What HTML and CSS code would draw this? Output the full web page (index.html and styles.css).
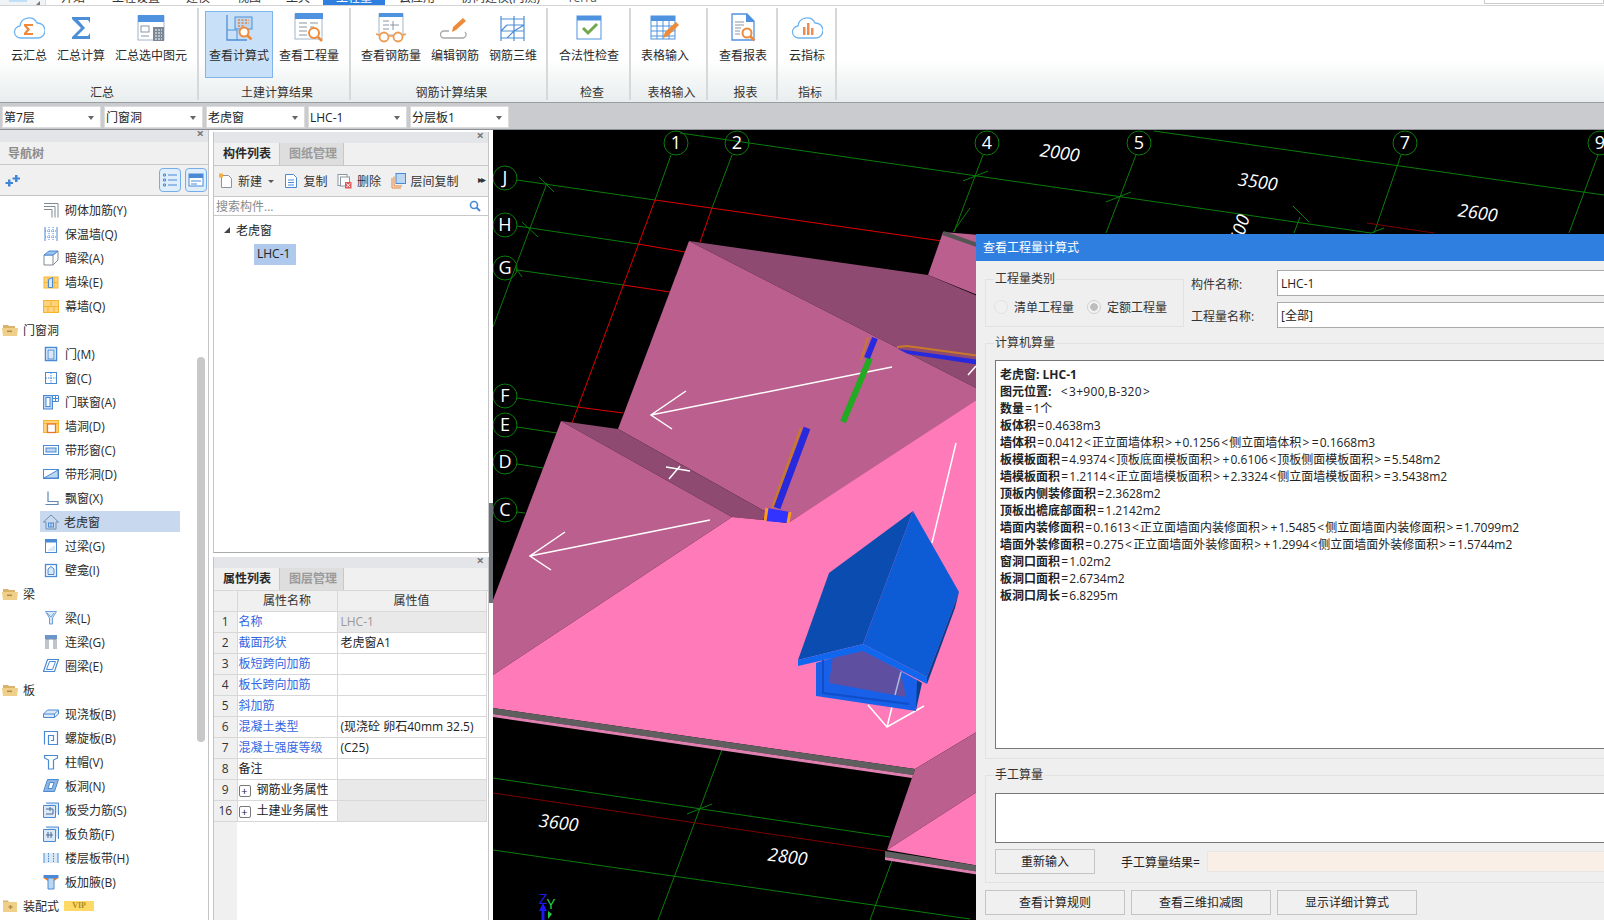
FILE: index.html
```html
<!DOCTYPE html>
<html lang="zh-CN">
<head>
<meta charset="utf-8">
<title>查看工程量计算式</title>
<link rel="stylesheet" href="styles.css">
</head>
<body>
<svg class="defs" width="0" height="0">
  <symbol id="folder" viewBox="0 0 16 12"><path d="M1 3V1h5l1 1h6v2H1z" fill="#d9b26c"/><path d="M0 4h16l-1 8H1z" fill="#f0cf88"/><rect x="5" y="6.5" width="5" height="1.6" fill="#b48c50"/></symbol>
</svg>
<div class="app">
  <div class="tabs">
    <div class="logo"><span class="logo-mark"></span><span class="logo-tri"></span></div>
    <span class="tab t1">开始</span><span class="tab t2">工程设置</span><span class="tab t3">建模</span><span class="tab t4">视图</span><span class="tab t5">工具</span><span class="tab active">工程量</span><span class="tab t7">云应用</span><span class="tab t8">协同建模(内测)</span><span class="tab t9">Terra</span>
    <div class="finder"></div>
  </div>

  <div class="ribbon">
    <div class="group g1">
      <div class="btns">
        <div class="rb w44"><svg width="32" height="30" viewBox="0 0 32 30"><path d="M8 25a6 6 0 0 1-1-12 9 9 0 0 1 17-3 7.500 7.500 0 0 1 1 15z" fill="#fff" stroke="#6fb4f0" stroke-width="1.300"/><path d="M11 11h9v2h-6l3 3.500-3 3.500h6v2h-9v-2l3-3.500-3-3.500z" fill="#f0883a"/></svg><span>云汇总</span></div>
        <div class="rb w56"><svg width="32" height="30" viewBox="0 0 32 30"><path d="M7 4h18v6l-2-3H13l7 8-8 8h11l2-3v6H7v-2l9-9-9-9z" fill="#4d8fd6"/></svg><span>汇总计算</span></div>
        <div class="rb w80"><svg width="32" height="30" viewBox="0 0 32 30"><rect x="3" y="3" width="26" height="24" fill="#fff" stroke="#9fb6cc"/><rect x="3" y="2" width="26" height="7" fill="#4f93e0"/><rect x="6" y="13" width="8" height="6" fill="none" stroke="#8a96a2"/><path d="M6 23h8" stroke="#8a96a2"/><rect x="18" y="14" width="11" height="14" fill="#7b8794"/><path d="M20 17h7M20 20h7M20 23h7M20 26h7" stroke="#fff" stroke-dasharray="2 1"/></svg><span>汇总选中图元</span></div>
      </div>
      <div class="gt">汇总</div>
    </div>
    <div class="group g2">
      <div class="btns">
        <div class="rb w68 on"><svg width="32" height="30" viewBox="0 0 32 30"><path d="M4 2v25h20" fill="none" stroke="#4d8fd6" stroke-width="1.300"/><path d="M4 17h10v10" fill="none" stroke="#4d8fd6"/><rect x="12" y="4" width="17" height="12" fill="#bcd7f2" stroke="#4d8fd6"/><path d="M15 7h11M15 10h11M15 13h6" stroke="#e8813a" stroke-width="1.500" stroke-dasharray="2 1.500"/><circle cx="21" cy="19" r="4.500" fill="#fff" stroke="#ee8b3a" stroke-width="2"/><path d="M24.500 22.500l4 4" stroke="#ee8b3a" stroke-width="2.500"/></svg><span>查看计算式</span></div>
        <div class="rb w68"><svg width="32" height="30" viewBox="0 0 32 30"><rect x="2" y="1" width="27" height="25" fill="#fff" stroke="#9fb6cc"/><rect x="2" y="0" width="28" height="6" fill="#4f93e0"/><path d="M6 10h8M17 10h8M6 14h8M17 14h4M6 18h8M6 22h8" stroke="#8a96a2"/><circle cx="21" cy="20" r="5" fill="#fff" stroke="#ee8b3a" stroke-width="2"/><path d="M25 24l4 4" stroke="#ee8b3a" stroke-width="2.500"/></svg><span>查看工程量</span></div>
      </div>
      <div class="gt">土建计算结果</div>
    </div>
    <div class="group g3">
      <div class="btns">
        <div class="rb w68"><svg width="32" height="30" viewBox="0 0 32 30"><rect x="4" y="1" width="24" height="21" fill="#fff" stroke="#9fb6cc"/><rect x="4" y="0" width="24" height="4" fill="#4f93e0"/><path d="M8 8h6M8 12h6M8 16h6M18 8v9M15 12h9" stroke="#8a96a2"/><circle cx="9" cy="24" r="4.500" fill="#fff" stroke="#ee9a50" stroke-width="1.800"/><circle cx="23" cy="24" r="4.500" fill="#fff" stroke="#ee9a50" stroke-width="1.800"/><path d="M13 23h6M1 21l3 1M31 21l-3 1" stroke="#ee9a50" stroke-width="1.500"/></svg><span>查看钢筋量</span></div>
        <div class="rb w56"><svg width="32" height="30" viewBox="0 0 32 30"><path d="M10 18H5a3.500 3.500 0 0 0 0 7h19a3.500 3.500 0 0 0 2-6" fill="none" stroke="#a8a8a8" stroke-width="1.300"/><path d="M13 19l1-5L24 5l3 3-10 9z" fill="#ee8b3a"/></svg><span>编辑钢筋</span></div>
        <div class="rb w56"><svg width="32" height="30" viewBox="0 0 32 30"><path d="M4 3v25M27 3v25M17 3v25M4 6h23M10 12h17M4 18h23M4 25h23M4 18l6-6M17 18l-7 7M27 12l-10 6" fill="none" stroke="#4d8fd6" stroke-width="1.200"/></svg><span>钢筋三维</span></div>
      </div>
      <div class="gt">钢筋计算结果</div>
    </div>
    <div class="group g4">
      <div class="btns">
        <div class="rb w68"><svg width="32" height="30" viewBox="0 0 32 30"><rect x="4" y="3" width="24" height="23" fill="#fff" stroke="#4f93e0"/><rect x="4" y="3" width="24" height="4.500" fill="#4f93e0"/><path d="M10 15l5 5 9-9" fill="none" stroke="#72a84c" stroke-width="3"/></svg><span>合法性检查</span></div>
      </div>
      <div class="gt">检查</div>
    </div>
    <div class="group g5">
      <div class="btns">
        <div class="rb w56"><svg width="32" height="30" viewBox="0 0 32 30"><rect x="2" y="3" width="24" height="23" fill="#fff" stroke="#4f93e0"/><rect x="2" y="3" width="24" height="5" fill="#4f93e0"/><path d="M2 13h24M2 18h24M2 23h24M8 8v18M14 8v18M20 8v18" stroke="#4f93e0"/><path d="M14 25l2-6L27 9l3 3-11 11z" fill="#ee8b3a"/></svg><span>表格输入</span></div>
      </div>
      <div class="gt">表格输入</div>
    </div>
    <div class="group g6">
      <div class="btns">
        <div class="rb w56"><svg width="32" height="30" viewBox="0 0 32 30"><path d="M5 1h15l7 7v19H5z" fill="#fff" stroke="#4f93e0" stroke-width="1.300"/><path d="M19 1h1l7 7v1h-8z" fill="#4f93e0"/><path d="M8 9h9M8 12h9M8 15h6M8 18h5M8 21h5" stroke="#8a96a2"/><circle cx="20" cy="20" r="4.500" fill="#fff" stroke="#ee8b3a" stroke-width="2"/><path d="M23.500 23.500l4 4" stroke="#ee8b3a" stroke-width="2.500"/></svg><span>查看报表</span></div>
      </div>
      <div class="gt">报表</div>
    </div>
    <div class="group g7">
      <div class="btns">
        <div class="rb w44"><svg width="32" height="30" viewBox="0 0 32 30"><path d="M8 25a6 6 0 0 1-1-12 9 9 0 0 1 17-3 7.500 7.500 0 0 1 1 15z" fill="#fff" stroke="#6fb4f0" stroke-width="1.300"/><path d="M12 14h2.500v8H12zM16 10h2.500v12H16zM20 15h2.500v7H20z" fill="#ee8b50"/></svg><span>云指标</span></div>
      </div>
      <div class="gt">指标</div>
    </div>
  </div>

  <div class="selectors">
    <div class="sel">第7层<i></i></div>
    <div class="sel">门窗洞<i></i></div>
    <div class="sel">老虎窗<i></i></div>
    <div class="sel">LHC-1<i></i></div>
    <div class="sel">分层板1<i></i></div>
  </div>

  <div class="main">
    <aside class="nav">
      <div class="strip"><span class="x">×</span></div>
      <div class="nav-title">导航树</div>
      <div class="nav-tools">
        <svg width="16" height="14" viewBox="0 0 16 14"><path d="M3 6.500h2.500V9H8v2H5.500v2.500H3V11H0.500V9H3zM10 2h2.500v2.500H15v2h-2.500V9H10V6.500H7.500v-2H10z" fill="#3f86d8"/></svg>
        <div class="tb-btn tb-first"><svg width="16" height="16" viewBox="0 0 16 16"><path d="M6 3h9M6 8h9M6 13h9" stroke="#4a8ad4"/><path d="M1.500 2h2v2h-2zM1.500 7h2v2h-2zM1.500 12h2v2h-2z" fill="none" stroke="#4a8ad4"/></svg></div>
        <div class="tb-btn"><svg width="16" height="16" viewBox="0 0 16 16"><rect x="1" y="2" width="14" height="12" fill="#fff" stroke="#4a8ad4"/><rect x="1" y="2" width="14" height="4" fill="#4a8ad4"/><path d="M3 9h10M3 12h6" stroke="#4a8ad4"/></svg></div>
      </div>
      <div class="tree">
        <div class="t"><svg width="16" height="16" viewBox="0 0 16 16"><path d="M1 1.500h14v14M1 4.500h11v11M1 7.500h8v8" fill="none" stroke="#7f8a96"/></svg>砌体加筋(Y)</div>
        <div class="t"><svg width="16" height="16" viewBox="0 0 16 16"><path d="M2 1v14M14 1v14" stroke="#4a8ad4"/><path d="M6 1v14M10 1v14M2 5h12M2 11h12" stroke="#4a8ad4" stroke-dasharray="1 1"/></svg>保温墙(Q)</div>
        <div class="t"><svg width="16" height="16" viewBox="0 0 16 16"><path d="M1 5h9v10H1zM10 5l5-4v9l-5 5" fill="#fff" stroke="#7f8a96"/><path d="M1 5l5-4h9l-5 4z" fill="#9cc3ee" stroke="#4a8ad4"/></svg>暗梁(A)</div>
        <div class="t"><svg width="16" height="16" viewBox="0 0 16 16"><rect x="1" y="3" width="14" height="11" fill="#ffd27f" stroke="#f5b52e"/><path d="M1 8.500h14M5 3v11M11 3v11" stroke="#f5b52e"/><path d="M5.500 5.500l4-2v10h-4z" fill="#dbe8f6" stroke="#4a8ad4"/></svg>墙垛(E)</div>
        <div class="t"><svg width="16" height="16" viewBox="0 0 16 16"><rect x="0.500" y="2.500" width="15" height="12" fill="#ffd27f" stroke="#f5b52e"/><path d="M0.500 8.500h15M8 2.500v6M5 8.500v6M11 8.500v6" stroke="#f5b52e"/></svg>幕墙(Q)</div>
        <div class="t grp"><svg width="16" height="12"><use href="#folder"/></svg>门窗洞</div>
        <div class="t"><svg width="16" height="16" viewBox="0 0 16 16"><rect x="2.500" y="1.500" width="11" height="13" fill="#fff" stroke="#4a8ad4" stroke-width="1.500"/><rect x="5" y="4" width="6" height="9" fill="#dbe8f6" stroke="#4a8ad4"/></svg>门(M)</div>
        <div class="t"><svg width="16" height="16" viewBox="0 0 16 16"><rect x="2.500" y="2.500" width="11" height="11" fill="#fff" stroke="#4a8ad4"/><path d="M8 2.500v11M2.500 8h11" stroke="#4a8ad4" stroke-dasharray="1.500 1"/></svg>窗(C)</div>
        <div class="t"><svg width="16" height="16" viewBox="0 0 16 16"><rect x="0.500" y="1.500" width="9" height="13.500" fill="#bcd7f2" stroke="#4a8ad4"/><rect x="3" y="3.500" width="4" height="9" fill="#fff" stroke="#4a8ad4"/><path d="M9.500 1.500h6v6h-6M12.500 1.500v6M9.500 4.500h6" fill="none" stroke="#4a8ad4"/></svg>门联窗(A)</div>
        <div class="t"><svg width="16" height="16" viewBox="0 0 16 16"><rect x="0.500" y="2.500" width="15" height="12" fill="#ffd27f" stroke="#f5b52e"/><path d="M0.500 5.500h15" stroke="#f5b52e"/><rect x="4.500" y="6" width="8" height="8.500" fill="#fff" stroke="#e8772e" stroke-width="1.300"/></svg>墙洞(D)</div>
        <div class="t"><svg width="16" height="16" viewBox="0 0 16 16"><rect x="0.500" y="3.500" width="15" height="9" fill="#fff" stroke="#4a8ad4"/><rect x="3" y="6" width="10" height="4" fill="#bcd7f2" stroke="#4a8ad4"/></svg>带形窗(C)</div>
        <div class="t"><svg width="16" height="16" viewBox="0 0 16 16"><rect x="0.500" y="3.500" width="15" height="9" fill="#fff" stroke="#4a8ad4"/><path d="M1 12l14-8v8z" fill="#bcd7f2" stroke="#4a8ad4"/></svg>带形洞(D)</div>
        <div class="t"><svg width="16" height="16" viewBox="0 0 16 16"><path d="M5 1.500v10h10v3H2.500" fill="none" stroke="#5f87b4" stroke-width="1.200"/></svg>飘窗(X)</div>
        <div class="t sel"><svg width="16" height="16" viewBox="0 0 16 16"><path d="M8 1L0.500 8h2.500v7h10V8h2.500z" fill="none" stroke="#6f8eaf"/><rect x="5.500" y="9" width="5" height="4" fill="none" stroke="#4a8ad4"/><path d="M8 9v4" stroke="#4a8ad4"/></svg>老虎窗</div>
        <div class="t"><svg width="16" height="16" viewBox="0 0 16 16"><rect x="2.500" y="1.500" width="11" height="13" fill="#fff" stroke="#4a8ad4"/><rect x="2.500" y="1.500" width="11" height="3" fill="#4a8ad4"/><path d="M5 12l5-4h2v5H5z" fill="#dbe8f6"/></svg>过梁(G)</div>
        <div class="t"><svg width="16" height="16" viewBox="0 0 16 16"><rect x="2.500" y="2.500" width="11" height="12" fill="#fff" stroke="#4a8ad4" stroke-width="1.300"/><path d="M5 12.500V7l3-2.500L11 7v5.500z" fill="#dbe8f6" stroke="#4a8ad4"/></svg>壁龛(I)</div>
        <div class="t grp"><svg width="16" height="12"><use href="#folder"/></svg>梁</div>
        <div class="t"><svg width="16" height="16" viewBox="0 0 16 16"><path d="M2.500 1.500h11L9.500 8v6h-3V8z" fill="#dbe8f6" stroke="#6ca0da"/><path d="M4 3l4 4 3-4" fill="none" stroke="#6ca0da"/></svg>梁(L)</div>
        <div class="t"><svg width="16" height="16" viewBox="0 0 16 16"><path d="M3 15V5h10v10M5 15V5M11 15V5" fill="none" stroke="#7f8a96"/><rect x="2" y="1" width="12" height="4" fill="#6a96cc"/></svg>连梁(G)</div>
        <div class="t"><svg width="16" height="16" viewBox="0 0 16 16"><path d="M4.500 1.500h11l-4 12H0.500z" fill="#fff" stroke="#4a8ad4" stroke-width="1.200"/><path d="M6.500 3.500h6l-3 8h-6z" fill="#fff" stroke="#4a8ad4"/></svg>圈梁(E)</div>
        <div class="t grp"><svg width="16" height="12"><use href="#folder"/></svg>板</div>
        <div class="t"><svg width="16" height="16" viewBox="0 0 16 16"><path d="M0.500 8l4-4h11l-4 4zM0.500 8v3.500h11V8M11.500 11.500l4-3.500V4" fill="#dbe8f6" stroke="#4a8ad4"/></svg>现浇板(B)</div>
        <div class="t"><svg width="16" height="16" viewBox="0 0 16 16"><path d="M1.500 14.500v-13h13v13h-9v-9h5v5H8" fill="none" stroke="#4a8ad4" stroke-width="1.200"/></svg>螺旋板(B)</div>
        <div class="t"><svg width="16" height="16" viewBox="0 0 16 16"><path d="M1.500 1.500h13v2.500L10.500 6v9h-5V6L1.500 4z" fill="#fff" stroke="#4a8ad4" stroke-width="1.200"/></svg>柱帽(V)</div>
        <div class="t"><svg width="16" height="16" viewBox="0 0 16 16"><path d="M4.500 1.500h11l-4 12H0.500z" fill="#8eb6e4" stroke="#4a8ad4"/><path d="M7 4.500h4l-2 6H5z" fill="#fff" stroke="#4a8ad4"/></svg>板洞(N)</div>
        <div class="t"><svg width="16" height="16" viewBox="0 0 16 16"><path d="M0.500 3.500h12v12H0.500zM3 1h12.500v12" fill="#dbe8f6" stroke="#4a8ad4"/><path d="M3 7h7v5H3M7 5v4" fill="none" stroke="#4a6a94"/></svg>板受力筋(S)</div>
        <div class="t"><svg width="16" height="16" viewBox="0 0 16 16"><path d="M0.500 3.500h12v12H0.500zM3 1h12.500v12" fill="#dbe8f6" stroke="#4a8ad4"/><path d="M3 9h7M5 6v6M8 6v6" fill="none" stroke="#4a6a94"/></svg>板负筋(F)</div>
        <div class="t"><svg width="16" height="16" viewBox="0 0 16 16"><rect x="1" y="3" width="14" height="10" fill="#dbe8f6"/><path d="M5.500 3v10M10.500 3v10" stroke="#4a8ad4" stroke-dasharray="1.500 1"/><path d="M1 3v10M15 3v10" stroke="#4a8ad4"/></svg>楼层板带(H)</div>
        <div class="t"><svg width="16" height="16" viewBox="0 0 16 16"><rect x="0.500" y="1" width="15" height="3" fill="#4a8ad4"/><path d="M0.500 4H5v3zM15.500 4H11v3z" fill="#f07820"/><path d="M5 4h6v11H5z" fill="#bcd7f2" stroke="#4a8ad4"/></svg>板加腋(B)</div>
        <div class="t grp"><svg width="16" height="12" viewBox="0 0 16 12"><path d="M1 2V0.500h5l1 1.500z" fill="#d9b26c"/><rect x="1" y="2" width="14" height="10" fill="#f0cf88"/><path d="M6.500 7h4M8.500 5v4" stroke="#b48c50" stroke-width="1.400"/></svg>装配式<span class="vip">VIP</span></div>
      </div>
      <div class="scroll"></div>
    </aside>

    <section class="mid">
      <div class="panel up">
        <div class="strip"><span class="x">×</span></div>
        <div class="ptabs"><span class="ptab cur">构件列表</span><span class="ptab">图纸管理</span></div>
        <div class="ptools">
          <span class="pt"><svg width="15" height="16" viewBox="0 0 15 16"><path d="M3.500 2.500h7l3 3v9h-10z" fill="#fff" stroke="#8a96a2"/><path d="M1 0.500h4v4H1z" fill="#f5b041"/></svg>新建<i class="caret"></i></span>
          <span class="pt"><svg width="15" height="16" viewBox="0 0 15 16"><path d="M1.500 1.500h8l3 3v10h-11z" fill="#fff" stroke="#4a8ad4"/><path d="M4 7h6M4 9.500h6M4 12h6" stroke="#4a8ad4"/></svg>复制</span>
          <span class="pt"><svg width="15" height="16" viewBox="0 0 15 16"><rect x="1" y="1.500" width="9" height="11" fill="#fff" stroke="#8a96a2"/><rect x="3.500" y="4" width="9" height="9" fill="#fff" stroke="#8a96a2"/><rect x="8" y="9" width="6.500" height="6.500" fill="#e05a5a"/><path d="M9.500 10.500l3.500 3.500M13 10.500L9.500 14" stroke="#fff"/></svg>删除</span>
          <span class="pt"><svg width="15" height="16" viewBox="0 0 15 16"><path d="M1 5v10h9" fill="none" stroke="#e8813a"/><path d="M3 3.500v9.500h8" fill="none" stroke="#e8813a"/><rect x="5" y="0.500" width="9.500" height="10" fill="#bcd7f2" stroke="#4a8ad4"/></svg>层间复制</span>
          <span class="more">▸▸</span>
        </div>
        <div class="search"><span>搜索构件...</span><svg width="12" height="12" viewBox="0 0 12 12"><circle cx="5" cy="5" r="3.500" fill="none" stroke="#4a8ad4" stroke-width="1.600"/><path d="M7.500 7.500L11 11" stroke="#4a8ad4" stroke-width="2"/></svg></div>
        <div class="ctree">
          <div class="croot"><i class="tri"></i>老虎窗</div>
          <div class="citem"><span>LHC-1</span></div>
        </div>
      </div>
      <div class="panel down">
        <div class="strip"><span class="x">×</span></div>
        <div class="ptabs"><span class="ptab cur">属性列表</span><span class="ptab">图层管理</span></div>
        <table class="props">
          <thead><tr><th class="n"></th><th>属性名称</th><th>属性值</th></tr></thead>
          <tbody>
            <tr><td class="n">1</td><td class="k">名称</td><td class="v off">LHC-1</td></tr>
            <tr><td class="n">2</td><td class="k">截面形状</td><td class="v">老虎窗A1</td></tr>
            <tr><td class="n">3</td><td class="k">板短跨向加筋</td><td class="v"></td></tr>
            <tr><td class="n">4</td><td class="k">板长跨向加筋</td><td class="v"></td></tr>
            <tr><td class="n">5</td><td class="k">斜加筋</td><td class="v"></td></tr>
            <tr><td class="n">6</td><td class="k">混凝土类型</td><td class="v">(现浇砼 卵石40mm 32.5)</td></tr>
            <tr><td class="n">7</td><td class="k">混凝土强度等级</td><td class="v">(C25)</td></tr>
            <tr><td class="n">8</td><td class="k plain">备注</td><td class="v"></td></tr>
            <tr><td class="n">9</td><td class="k plain"><i class="plus">+</i>钢筋业务属性</td><td class="v off"></td></tr>
            <tr><td class="n">16</td><td class="k plain"><i class="plus">+</i>土建业务属性</td><td class="v off"></td></tr>
          </tbody>
        </table>
      </div>
    </section>

    <div class="split"><span class="handle"></span></div>

    <div class="view">
      <svg class="scene" width="1111" height="790" viewBox="493 130 1111 790">
        <g fill="none" stroke="#0a7d0a" stroke-width="1">
          <path d="M517 180L655 200M680 133L1371 233M1154 131L1604 195M517 226L638 244M517 270L623 285M517 398L577 407M517 427L557 433M517 464L543 468M517 512L525 513"/>
          <path d="M671 155L655 200M732 155L712 208M547 183L493 327M539 177L554 192M522 222L538 237M515 267L522 277"/>
          <path d="M983 155L954 232M1136 155L1106 233M1401 155L1374 233M1598 155L1569 233M963 181L988 171M1106 202L1131 192M1371 233L1384 228M1293 206L1309 222M1300 217L1294 233M970 208L953 232"/>
          <path d="M493 778L890 837M493 850L970 919M723 747L658 920M687 814L712 804M893 858L870 920"/>
          <circle cx="676" cy="143" r="12"/>
          <circle cx="737" cy="143" r="12"/>
          <circle cx="505" cy="178" r="12"/>
          <circle cx="505" cy="225" r="12"/>
          <circle cx="505" cy="268" r="12"/>
          <circle cx="505" cy="396" r="12"/>
          <circle cx="505" cy="425" r="12"/>
          <circle cx="505" cy="462" r="12"/>
          <circle cx="505" cy="510" r="12"/>
          <circle cx="987" cy="143" r="12"/>
          <circle cx="1139" cy="143" r="12"/>
          <circle cx="1405" cy="143" r="12"/>
          <circle cx="1600" cy="143" r="12"/>
        </g>
        <g fill="none" stroke="#e00000" stroke-width="1">
          <path d="M655 200L942 241M638 244L685 252M623 285L670 292M577 407L623 413M655 200L572 423M712 208L700 242"/>
        </g>
        <path d="M1367 223L1434 233M493 793L885 851" fill="none" stroke="#7d0000"/>

        <polygon points="943,232 928,275 980,296 980,235" fill="#ba5f8e"/>
        <path d="M943 233L980 246" stroke="#555" stroke-width="4"/>
        <polygon points="689,241 928,275 980,297 980,390" fill="#8e4a70"/>
        <polygon points="689,241 980,390 980,400 788,523 766,512 618,429" fill="#ba5f8e"/>
        <polygon points="561,421 618,429 766,512 763,520 732,517" fill="#8e4a70"/>
        <polygon points="561,421 493,600 493,675 732,517" fill="#ba5f8e"/>
        <polygon points="493,675 732,517 763,520 788,523 980,398 980,730 915,769 493,708" fill="#ff7ab8"/>
        <polygon points="915,769 887,850 980,790 980,730" fill="#ba5f8e"/>
        <polygon points="887,850 980,790 980,866" fill="#ff7ab8"/>
        <polygon points="493,708 915,769 913,775 493,714" fill="#5f5f5f"/>
        <polygon points="493,714 913,775 912,778 493,717" fill="#e080b0"/>
        <polygon points="885,851 980,866 980,872 885,857" fill="#5f5f5f"/>
        <polygon points="885,857 980,872 980,875 885,860" fill="#e080b0"/>

        <g fill="none" stroke="#fff" stroke-width="1.500">
          <path d="M892 367L651 415M686 391L651 415L672 429M710 520L530 556M565 532L530 556L551 570"/>
          <path d="M956 443L932 543M666 467L690 471M680 466L669 479M868 705L887 727L924 706M887 727L892 707M968 375L976 366"/>
        </g>

        <path d="M870 358L843 422" stroke="#22aa22" stroke-width="6"/>
        <path d="M875 338L867 358" stroke="#2828dd" stroke-width="6"/>
        <path d="M868 337L861 360" stroke="#c87a2c" stroke-width="2"/>
        <path d="M807 428L777 508" stroke="#2828dd" stroke-width="7"/>
        <path d="M801 428L772 508" stroke="#c87a2c" stroke-width="2.500"/>
        <polygon points="767,508 790,512 788,523 765,521" fill="#3333ff"/>
        <path d="M767 508L765 521M790 512L788 523" stroke="#ff9922" stroke-width="3"/>
        <polygon points="898,349 980,360 980,365 908,354" fill="#2828dd"/>
        <path d="M897 347L907 346L980 356" fill="none" stroke="#c87a2c" stroke-width="2"/>

        <polygon points="916,710 922,683 917,680 911,702" fill="#0a3d8f"/>
        <polygon points="816,663 816,696 916,711 917,680 863,651 835,657" fill="#1860e8"/>
        <polygon points="829,683 833,657 863,650 900,670 906,697" fill="#5f4fa0"/>
        <path d="M901 672L895 695" stroke="#aabbdd" stroke-width="1.500"/>
        <path d="M823 660V693L909 704" fill="none" stroke="#0f4ec8" stroke-width="2"/>
        <polygon points="913,511 863,644 798,660 829,573" fill="#0b4cb0"/>
        <polygon points="913,511 959,592 927,677 863,644" fill="#0e5bd6"/>
        <polygon points="959,592 955,608 927,684 927,677" fill="#0a3d8f"/>
        <polygon points="798,660 863,644 927,677 927,684 863,651 798,666" fill="#1166ee"/>

        <g class="lbl">
          <text x="676" y="149" text-anchor="middle">1</text>
          <text x="737" y="149" text-anchor="middle">2</text>
          <text x="505" y="184" text-anchor="middle">J</text>
          <text x="505" y="231" text-anchor="middle">H</text>
          <text x="505" y="274" text-anchor="middle">G</text>
          <text x="505" y="402" text-anchor="middle">F</text>
          <text x="505" y="431" text-anchor="middle">E</text>
          <text x="505" y="468" text-anchor="middle">D</text>
          <text x="505" y="516" text-anchor="middle">C</text>
          <text x="987" y="149" text-anchor="middle">4</text>
          <text x="1139" y="149" text-anchor="middle">5</text>
          <text x="1405" y="149" text-anchor="middle">7</text>
          <text x="1600" y="149" text-anchor="middle">9</text>
        </g>
        <g class="dim">
          <text transform="translate(1059 159) rotate(8)" text-anchor="middle">2000</text>
          <text transform="translate(1257 188) rotate(8)" text-anchor="middle">3500</text>
          <text transform="translate(1477 219) rotate(8)" text-anchor="middle">2600</text>
          <text transform="translate(1244 236) rotate(-72)" text-anchor="middle">3500</text>
          <text transform="translate(558 829) rotate(7)" text-anchor="middle">3600</text>
          <text transform="translate(787 863) rotate(7)" text-anchor="middle">2800</text>
          <text transform="translate(873 128) rotate(8)" text-anchor="middle">00</text>
        </g>
        <text class="ax az" x="543" y="904" text-anchor="middle">Z</text>
        <text class="ax ay" x="551" y="909" text-anchor="middle">Y</text>
        <path d="M548 911l4 3-4 5z" fill="#22cc44"/>
        <path d="M543 903l4 8h-2.500v9h-3v-9H539z" fill="#1a1aee"/>
      </svg>

      <div class="dlg">
        <div class="dlg-title">查看工程量计算式</div>
        <div class="dlg-body">
          <div class="dlg-top">
            <fieldset class="types">
              <legend>工程量类别</legend>
              <div class="radios">
                <span class="radio"><i></i>清单工程量</span>
                <span class="radio checked"><i></i>定额工程量</span>
              </div>
            </fieldset>
            <div class="fields">
              <div class="field"><label>构件名称:</label><div class="inp">LHC-1</div></div>
              <div class="field"><label>工程量名称:</label><div class="inp">[全部]</div></div>
            </div>
          </div>
          <fieldset class="auto">
            <legend>计算机算量</legend>
            <div class="calc">
              <p><b>老虎窗: LHC-1</b></p>
              <p><b>图元位置:</b><span class="pos"><u class="o">&lt;</u>3+900,B-320<u class="o">&gt;</u></span></p>
              <p><b>数量</b><u class="o">=</u>1个</p>
              <p><b>板体积</b><u class="o">=</u>0.4638m3</p>
              <p><b>墙体积</b><u class="o">=</u>0.0412<u class="o">&lt;</u>正立面墙体积<u class="o">&gt;</u><u class="o">+</u>0.1256<u class="o">&lt;</u>侧立面墙体积<u class="o">&gt;</u><u class="o">=</u>0.1668m3</p>
              <p><b>板模板面积</b><u class="o">=</u>4.9374<u class="o">&lt;</u>顶板底面模板面积<u class="o">&gt;</u><u class="o">+</u>0.6106<u class="o">&lt;</u>顶板侧面模板面积<u class="o">&gt;</u><u class="o">=</u>5.548m2</p>
              <p><b>墙模板面积</b><u class="o">=</u>1.2114<u class="o">&lt;</u>正立面墙模板面积<u class="o">&gt;</u><u class="o">+</u>2.3324<u class="o">&lt;</u>侧立面墙模板面积<u class="o">&gt;</u><u class="o">=</u>3.5438m2</p>
              <p><b>顶板内侧装修面积</b><u class="o">=</u>2.3628m2</p>
              <p><b>顶板出檐底部面积</b><u class="o">=</u>1.2142m2</p>
              <p><b>墙面内装修面积</b><u class="o">=</u>0.1613<u class="o">&lt;</u>正立面墙面内装修面积<u class="o">&gt;</u><u class="o">+</u>1.5485<u class="o">&lt;</u>侧立面墙面内装修面积<u class="o">&gt;</u><u class="o">=</u>1.7099m2</p>
              <p><b>墙面外装修面积</b><u class="o">=</u>0.275<u class="o">&lt;</u>正立面墙面外装修面积<u class="o">&gt;</u><u class="o">+</u>1.2994<u class="o">&lt;</u>侧立面墙面外装修面积<u class="o">&gt;</u><u class="o">=</u>1.5744m2</p>
              <p><b>窗洞口面积</b><u class="o">=</u>1.02m2</p>
              <p><b>板洞口面积</b><u class="o">=</u>2.6734m2</p>
              <p><b>板洞口周长</b><u class="o">=</u>6.8295m</p>
            </div>
          </fieldset>
          <fieldset class="manual">
            <legend>手工算量</legend>
            <div class="hand"></div>
            <div class="hand-row">
              <div class="btn redo">重新输入</div>
              <span class="res-label">手工算量结果=</span>
              <div class="res"></div>
            </div>
          </fieldset>
          <div class="actions">
            <div class="btn act">查看计算规则</div>
            <div class="btn act">查看三维扣减图</div>
            <div class="btn act">显示详细计算式</div>
          </div>
        </div>
      </div>
    </div>
  </div>
</div>
</body>
</html>
```
FILE: styles.css
```css
* { box-sizing: border-box; }
html, body { margin: 0; padding: 0; }
body {
  width: 1604px; height: 920px; overflow: hidden; background: #fff;
  font-family: "Open Sans", "Noto Sans CJK SC", sans-serif;
  font-size: 12px; color: #222;
}
i { font-style: normal; }
.defs { position: absolute; }
.app { width: 1604px; height: 920px; display: flex; flex-direction: column; overflow: hidden; }

/* tabs */
.tabs { height: 6px; flex: none; display: flex; overflow: hidden; border-bottom: 1px solid #d4d4d4; background: #fff; position: relative; }
.logo { width: 46px; flex: none; background: #f1f4f7; display: flex; justify-content: space-between; border-right: 1px solid #ddd; }
.logo-mark { width: 18px; height: 2px; margin-left: 9px; background: #bfe0f7; }
.logo-tri { width: 0; height: 0; margin: 1px 5px 0 0; border-style: solid; border-width: 0 0 4px 4px; border-color: transparent transparent #777 transparent; }
.tab { line-height: 18px; height: 18px; margin-top: -11px; color: #333; flex: none; }
.t1 { margin-left: 15px; width: 51px; }
.t2 { width: 74px; }
.t3 { width: 51px; }
.t4 { width: 49px; }
.t5 { width: 37px; }
.tab.active { width: 62px; height: 24px; background: #2e7fe0; color: #fff; text-align: center; }
.t7 { margin-left: 14px; width: 62px; }
.t8 { width: 106px; }
.t9 { color: #555; }
.finder { position: absolute; right: 0; top: 0; width: 120px; height: 4px; border: 1px solid #ccc; border-top: 0; }

/* ribbon */
.ribbon { height: 97px; flex: none; display: flex; padding-top: 2px; background: linear-gradient(#fff 0, #fff 55%, #e8eded 100%); border-bottom: 1px solid #9a9da0; }
.group { height: 92px; border-right: 2px solid #d6d9da; padding-top: 3px; padding-left: 7px; display: flex; flex-direction: column; flex: none; }
.g1 { width: 199px; }
.g2 { width: 152px; padding-left: 6px; }
.g3 { width: 197px; padding-left: 6px; }
.g4 { width: 83px; }
.g5 { width: 77px; padding-left: 6px; }
.g6 { width: 70px; }
.g7 { width: 59px; }
.btns { display: flex; gap: 2px; height: 67px; }
.rb { display: flex; flex-direction: column; align-items: center; padding-top: 2px; height: 67px; border: 1px solid transparent; flex: none; }
.rb svg { margin-top: -1px; flex: none; }
.rb span { line-height: 20px; margin-top: 3px; white-space: nowrap; color: #2a2a2a; }
.rb.on { background: #c9e1f8; border-color: #7fb4ea; }
.w44 { width: 44px; }
.w56 { width: 56px; }
.w68 { width: 68px; }
.w80 { width: 80px; }
.gt { margin-top: 6px; line-height: 18px; text-align: center; color: #333; }

/* selectors */
.selectors { height: 27px; flex: none; background: #c9cbcf; padding: 3px 0 0 2px; display: flex; gap: 3px; border-bottom: 1px solid #8e9296; }
.sel { width: 99px; height: 22px; background: #fff; border: 1px solid #dcdcdc; line-height: 22px; padding-left: 1px; position: relative; color: #222; }
.sel i { position: absolute; right: 6px; top: 9px; border-style: solid; border-width: 4px 3px 0 3px; border-color: #666 transparent transparent transparent; }

/* main */
.main { flex: 1; display: flex; min-height: 0; background: #fff; }
.strip { height: 11px; background: #e4e5e8; position: relative; flex: none; }
.x { position: absolute; right: 4px; top: -4px; font-size: 13px; line-height: 15px; color: #777; font-weight: 700; }

/* nav */
.nav { width: 209px; flex: none; border-right: 1px solid #c4c4c4; position: relative; }
.nav .strip { height: 12px; }
.nav-title { height: 23px; background: #f0f0f0; border-bottom: 1px solid #c8c8c8; color: #8c8c8c; font-weight: 700; padding-left: 8px; line-height: 24px; }
.nav-tools { height: 31px; background: #f0f0f0; border-bottom: 1px solid #c4c4c4; display: flex; align-items: center; padding-left: 5px; }
.tb-btn { width: 22px; height: 24px; border: 1px solid #74aeea; border-radius: 4px; background: #e0edfb; display: flex; align-items: center; justify-content: center; margin-left: 4px; }
.tb-first { margin-left: 138px; }
.tree { padding-top: 2px; }
.t { height: 24px; display: flex; align-items: center; gap: 6px; padding-left: 43px; white-space: nowrap; color: #2a2a2a; }
.t svg { flex: none; }
.t.grp { padding-left: 2px; gap: 5px; }
.t.sel { height: 21px; width: 140px; margin: 1px 0 2px 40px; padding-left: 3px; gap: 5px; background: #c7d8ef; border: 0; line-height: normal; }
.vip { margin-left: 0; width: 30px; height: 10px; background: #ffd966; color: #b08a20; font: 700 8px/10px "Liberation Serif", serif; text-align: center; }
.scroll { position: absolute; left: 197px; top: 227px; width: 8px; height: 385px; border-radius: 4px; background: #c8c8c8; }

/* middle */
.mid { width: 276px; margin-left: 4px; flex: none; display: flex; flex-direction: column; }
.panel { border-left: 1px solid #c4c4c4; border-right: 1px solid #c4c4c4; display: flex; flex-direction: column; }
.up { height: 421px; margin-top: 2px; border-bottom: 1px solid #aaa; }
.down { flex: 1; margin-top: 4px; background: linear-gradient(90deg, #f0f0f0 23px, #fff 23px); }
.ptabs { height: 23px; background: #f0f0f0; border-bottom: 1px solid #c8c8c8; display: flex; flex: none; }
.ptab { width: 65px; height: 22px; padding-left: 9px; line-height: 22px; font-weight: 700; color: #9a9a9a; background: #dedede; border-left: 1px solid #c8c8c8; border-right: 1px solid #c8c8c8; }
.ptab.cur { color: #2a2a2a; background: #f0f0f0; border: 0; }
.ptools { height: 31px; flex: none; background: #f0f0f0; border-bottom: 1px solid #c8c8c8; display: flex; align-items: center; padding-left: 4px; position: relative; color: #333; }
.pt { display: flex; align-items: center; gap: 5px; margin-right: 9.5px; white-space: nowrap; }
.caret { border-style: solid; border-width: 3px 3px 0 3px; border-color: #555 transparent transparent transparent; margin-left: 1px; }
.more { position: absolute; right: 4px; top: 6px; font-size: 10px; letter-spacing: -2px; color: #333; }
.search { height: 19px; flex: none; border-bottom: 1px solid #c8c8c8; display: flex; align-items: center; justify-content: space-between; padding: 0 7px 0 2px; color: #8a8a8a; }
.ctree { flex: 1; background: #fff; }
.croot { height: 24px; margin: 2px 0 2px; display: flex; align-items: center; gap: 6px; padding-left: 10px; }
.tri { border-style: solid; border-width: 0 0 6px 6px; border-color: transparent transparent #444 transparent; }
.citem { padding-left: 40px; }
.citem span { display: block; width: 42px; height: 21px; line-height: 20px; background: #aec9ec; padding-left: 3px; }
.props { width: 272px; border-collapse: collapse; table-layout: fixed; margin-top: -1px; }
.props th, .props td { height: 21px; padding: 0; border: 1px solid #d8d8d8; font-weight: 400; line-height: 18px; white-space: nowrap; overflow: hidden; }
.props th { background: #f0f0f0; text-align: center; color: #333; }
.props th:first-child, .props td.n { width: 23px; border-left: 0; }
.props th:nth-child(2) { width: 100px; }
.props th:nth-child(3) { width: 149px; }
.props td.n { background: #f0f0f0; text-align: center; color: #333; }
.props td.k { background: #fff; color: #3366e0; padding-left: 1px; }
.props td.k.plain { color: #222; }
.props td.v { background: #fff; padding-left: 3px; color: #222; }
.props td.v.off { background: #e9e9e9; color: #9a9a9a; }
.plus { display: inline-block; width: 12px; height: 12px; border: 1px solid #777; border-radius: 2px; line-height: 9px; text-align: center; margin-right: 6px; vertical-align: -1px; font-size: 11px; }

/* splitter */
.split { width: 4px; flex: none; position: relative; }
.handle { position: absolute; left: 0; top: 373px; width: 4px; height: 100px; background: #6d7278; }

/* 3d view */
.view { flex: 1; position: relative; background: #000; overflow: hidden; }
.scene { display: block; }
.lbl text { font: 400 18px "Open Sans", sans-serif; fill: #fff; }
.dim text { font: italic 400 18px "Open Sans", sans-serif; fill: #fff; }
.ax { font: 400 15px "Open Sans", sans-serif; }
.az { fill: #1a1aee; }
.ay { fill: #22dd44; }

/* dialog */
.dlg { position: absolute; left: 483px; top: 104px; width: 800px; height: 686px; background: #efefef; display: flex; flex-direction: column; color: #222; }
.dlg-title { height: 27px; flex: none; background: #2e7fe0; color: #fff; line-height: 28px; padding-left: 7px; }
.dlg-body { padding: 10px 0 0 9px; display: flex; flex-direction: column; flex: 1; min-height: 0; }
.dlg-top { display: flex; height: 57px; flex: none; }
fieldset { margin: 0; padding: 0; border: 1px solid #e2e2e2; min-width: 0; }
legend { padding: 0 1px; margin-left: 8px; line-height: 16px; font-size: 12px; color: #333; }
.types { width: 199px; height: 56px; flex: none; }
.radios { display: flex; padding: 10px 0 0 8px; }
.radio { display: flex; align-items: center; height: 20px; gap: 6px; width: 93px; color: #333; }
.radio i { width: 14px; height: 14px; border-radius: 50%; border: 1px solid #e2e2e2; background: #f0f0f0; flex: none; }
.radio.checked i { border-color: #d0d0d0; background: radial-gradient(circle, #bdbdbd 0 3.5px, #f2f2f2 4px); }
.fields { margin-left: 7px; margin-top: -1px; display: flex; flex-direction: column; gap: 6px; }
.field { display: flex; align-items: center; height: 26px; }
.field label { width: 86px; flex: none; color: #333; padding-top: 1px; }
.inp { width: 520px; height: 26px; background: #fff; border: 1px solid #aaa; line-height: 26px; padding-left: 3px; }
.auto { margin-top: 7px; height: 424px; flex: none; }
.calc { margin: 9px 0 0 9px; height: 389px; background: #fff; border: 1px solid #777; padding: 5px 0 0 4px; line-height: 17px; white-space: nowrap; }
.calc p { margin: 0; height: 17px; }
.calc b { font-weight: 700; }
.pos { margin-left: 8px; letter-spacing: 0.3px; }
.o { text-decoration: none; padding: 0 1.2px; }
.manual { margin-top: 8px; height: 116px; flex: none; }
.hand { margin: 10px 0 0 9px; height: 50px; background: #fff; border: 1px solid #777; }
.hand-row { display: flex; align-items: center; margin: 6px 0 0 9px; height: 25px; }
.btn { background: #f0f0f0; border: 1px solid #c4c4c4; text-align: center; line-height: 23px; height: 25px; flex: none; color: #222; }
.redo { width: 100px; }
.res-label { margin-left: 26px; width: 86px; flex: none; color: #222; }
.res { width: 500px; height: 21px; background: #f9efe6; border: 1px solid #e6e6e6; }
.actions { display: flex; gap: 6px; margin-top: 7px; }
.act { width: 140px; }
```
